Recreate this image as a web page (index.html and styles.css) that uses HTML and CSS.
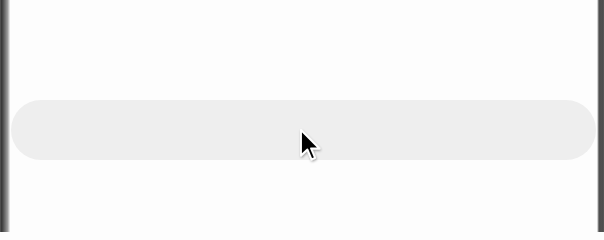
FILE: index.html
```html
<!DOCTYPE html>
<html>
<head>
<meta charset="utf-8">
<link rel="stylesheet" href="styles.css">
</head>
<body>
<div class="frame">
  <div class="edge-left"></div>
  <main class="content">
    <div class="pill"></div>
  </main>
  <div class="edge-right"></div>
</div>
<svg class="cursor" width="28" height="40" viewBox="0 0 28 40">
  <defs>
    <filter id="sh" x="-30%" y="-30%" width="160%" height="160%">
      <feDropShadow dx="0.6" dy="1.2" stdDeviation="1" flood-color="#000" flood-opacity="0.35"/>
    </filter>
  </defs>
  <path transform="translate(3 3) scale(1.1)" filter="url(#sh)" d="M0 0 V23.2 L5.8 17.7 L9.6 26.8 L12.8 25.4 L9.1 16.8 H16.7 Z" fill="#000" stroke="#fff" stroke-width="1.7" stroke-linejoin="round"/>
</svg>
</body>
</html>
```
FILE: styles.css
```css
html, body {
  margin: 0;
  padding: 0;
}
body {
  width: 604px;
  height: 232px;
  background: #fdfdfd;
  position: relative;
  overflow: hidden;
  font-family: "Liberation Sans", Arial, sans-serif;
}
.frame {
  display: flex;
  height: 232px;
}
.edge-left {
  width: 10px;
  flex: none;
  background: linear-gradient(to right, #5a5a5a 0px, #3a3a3a 1.5px, #454545 2.5px, #565656 3.5px, #676767 4.5px, #787878 5.5px, #8a8a8a 6.5px, #9c9c9c 7.5px, #bdbdbd 8.5px, #e2e2e2 9.5px, #f6f6f6 10px);
}
.content {
  flex: 1;
  padding: 100px 1px 0 1px;
}
.pill {
  height: 60px;
  border-radius: 30px;
  background: #eeeeee;
}
.edge-right {
  width: 7px;
  flex: none;
  background: linear-gradient(to right, #d2d2d2 0px, #d2d2d2 1px, #7a7a7a 1px, #7a7a7a 2px, #505050 2px, #4a4a4a 3px, #555555 4px, #4c4c4c 5px, #575757 7px);
}
.cursor {
  position: absolute;
  left: 298px;
  top: 127px;
  overflow: visible;
}
```
